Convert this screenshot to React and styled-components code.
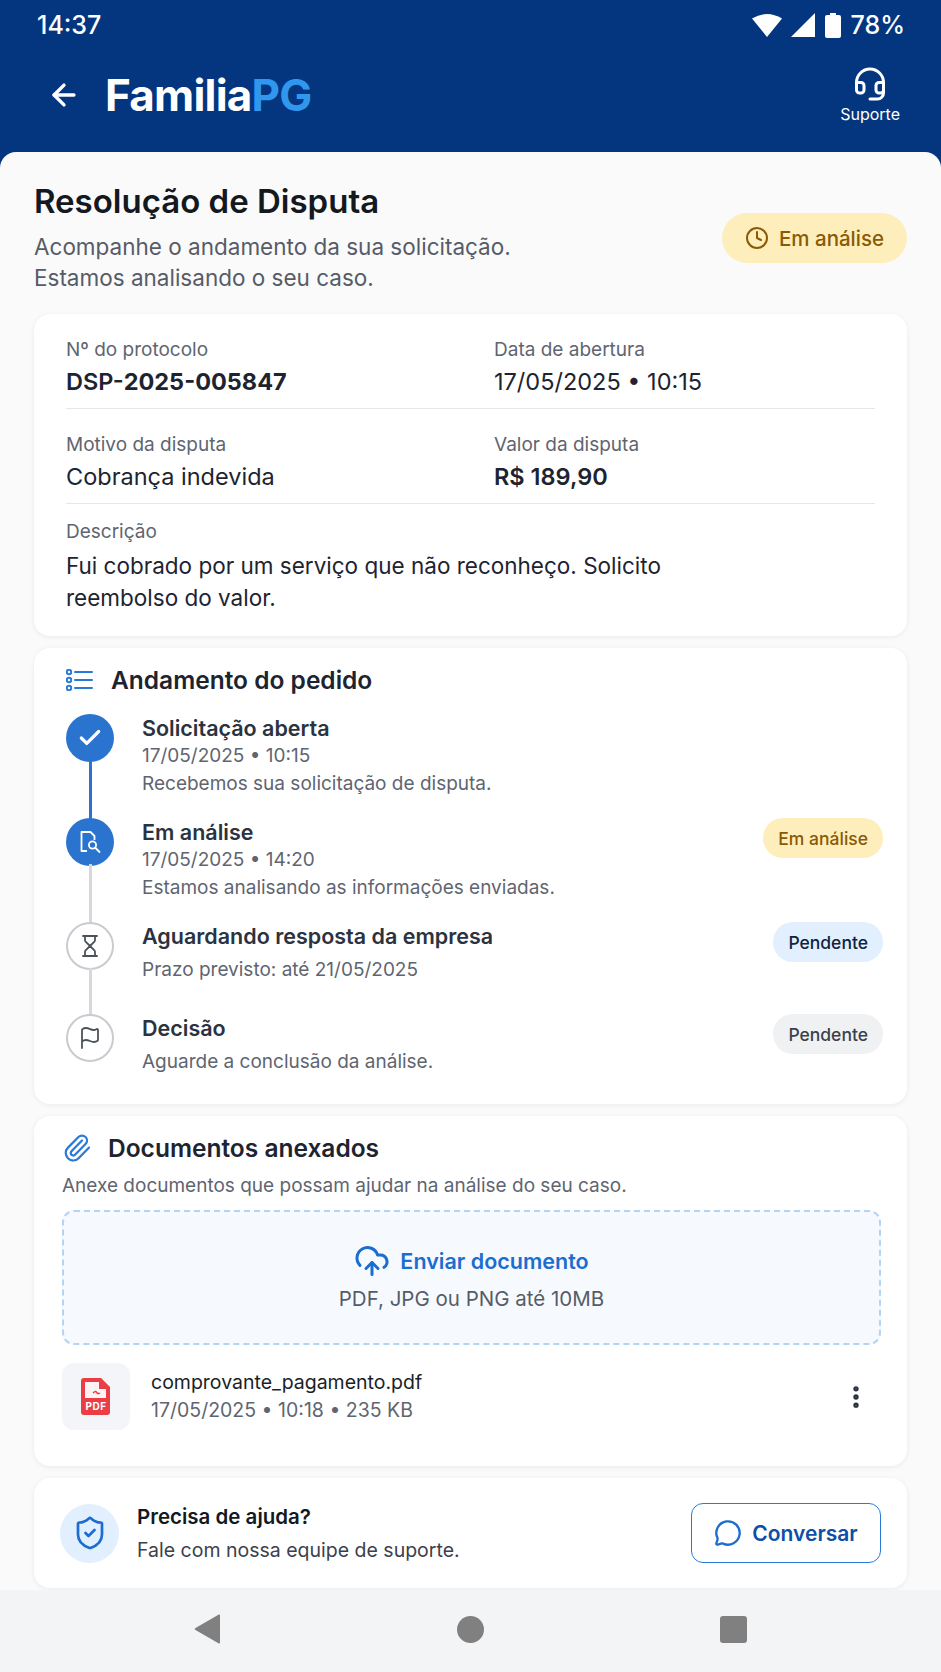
import React from 'react'
import styled, { createGlobalStyle } from 'styled-components'
import { ArrowLeft, Headset, Clock, Check, Hourglass, Flag, Paperclip, CloudUpload, MoreVertical, ShieldCheck, MessageCircle } from 'lucide-react'

const Global = createGlobalStyle`
  html, body { margin: 0; padding: 0; background: #04367f; }
  * { box-sizing: border-box; }
  body { font-family: Inter, "Noto Sans", sans-serif; }
`

const Phone = styled.div`
  width: 941px;
  height: 1672px;
  display: flex;
  flex-direction: column;
  overflow: hidden;
  background: #04367f;
`
const Status = styled.div`
  height: 50px;
  padding: 0 36px 0 37px;
  display: flex;
  align-items: center;
  justify-content: space-between;
  color: #fff;
  font-size: 25px;
  font-weight: 500;
`
const StatusRight = styled.div`
  display: flex;
  align-items: center;
  gap: 9px;
`
const TopBar = styled.div`
  height: 102px;
  padding: 0 41px 12px 47px;
  display: flex;
  align-items: center;
  color: #fff;
`
const Logo = styled.div`
  margin-left: 24px;
  font-size: 44px;
  font-weight: 700;
  letter-spacing: -0.8px;
  flex: 1;
  span { color: #2f97ee; }
`
const Support = styled.div`
  display: flex;
  flex-direction: column;
  align-items: center;
  gap: 2px;
  font-size: 16px;
`
const Sheet = styled.div`
  flex: 1;
  min-height: 0;
  background: #fafafb;
  border-radius: 16px 16px 0 0;
  padding: 0 34px;
  overflow: hidden;
`
const Head = styled.div`
  height: 162px;
  display: flex;
  align-items: flex-start;
  justify-content: space-between;
  padding-top: 29px;
`
const Title = styled.h1`
  margin: 0 0 10px;
  font-size: 33px;
  line-height: 40px;
  font-weight: 600;
  color: #14181f;
`
const Sub = styled.p`
  margin: 0;
  font-size: 22.5px;
  line-height: 31px;
  color: #565c67;
`
const BigBadge = styled.div`
  margin-top: 32px;
  height: 50px;
  width: 185px;
  border-radius: 25px;
  background: #fdeebc;
  color: #8a5a06;
  display: flex;
  align-items: center;
  justify-content: center;
  gap: 10px;
  font-size: 20.5px;
  font-weight: 500;
`
const Card = styled.section`
  background: #fff;
  border-radius: 16px;
  box-shadow: 0 1px 5px rgba(20, 30, 50, 0.07);
  margin-bottom: 12px;
  height: ${p => p.$h}px;
  padding: ${p => p.$pad};
`
const InfoRow = styled.div`
  display: grid;
  grid-template-columns: 428px 1fr;
  height: 95px;
  padding-top: 24px;
  border-bottom: 1px solid #e4e6e9;
`
const Label = styled.div`
  font-size: 19px;
  line-height: 24px;
  color: #5f6570;
`
const Value = styled.div`
  margin-top: 5px;
  font-size: 23.5px;
  line-height: 30px;
  color: #1d2430;
  font-weight: ${p => p.$bold ? 600 : 400};
  b { font-weight: 700; }
`
const Desc = styled.div`
  padding-top: 16px;
`
const DescText = styled.div`
  margin-top: 6px;
  font-size: 22.5px;
  line-height: 32px;
  color: #1d2430;
  width: 640px;
`
const SectionHead = styled.div`
  display: flex;
  align-items: center;
  gap: ${p => p.$gap}px;
  height: 32px;
  font-size: 24.5px;
  font-weight: 600;
  color: #1d2430;
`
const Step = styled.div`
  display: flex;
  height: ${p => p.$h}px;
`
const Rail = styled.div`
  position: relative;
  width: 48px;
  margin-right: 28px;
  flex: none;
  &::after {
    content: '';
    display: ${p => p.$last ? 'none' : 'block'};
    position: absolute;
    left: 22.5px;
    top: 46px;
    bottom: -2px;
    width: 3px;
    background: ${p => p.$active ? '#2a74d0' : '#d6d8dc'};
  }
`
const Dot = styled.div`
  width: 48px;
  height: 48px;
  border-radius: 50%;
  display: flex;
  align-items: center;
  justify-content: center;
  background: ${p => p.$done ? '#2a74d0' : '#fff'};
  border: ${p => p.$done ? 'none' : '2px solid #c9cbd0'};
  color: ${p => p.$done ? '#fff' : '#4c525c'};
`
const StepBody = styled.div`
  flex: 1;
`
const StepTitle = styled.div`
  font-size: 21.5px;
  line-height: 28px;
  font-weight: 600;
  color: #2b3240;
  margin-bottom: ${p => p.$gap || 0}px;
`
const StepText = styled.div`
  font-size: 19px;
  line-height: 27.5px;
  color: #5f6570;
`
const Pill = styled.div`
  flex: none;
  align-self: flex-start;
  margin-top: ${p => p.$top}px;
  height: 40px;
  padding: 0 15px;
  border-radius: 20px;
  display: flex;
  align-items: center;
  font-size: 17.5px;
  font-weight: 500;
  background: ${p => p.$bg};
  color: ${p => p.$fg};
`
const Hint = styled.div`
  margin-top: 9px;
  font-size: 19px;
  line-height: 26px;
  color: #5f6570;
`
const Drop = styled.div`
  margin-top: 11px;
  height: 135px;
  border: 2px dashed #b4d4f6;
  border-radius: 12px;
  background: #f6faff;
  display: flex;
  flex-direction: column;
  align-items: center;
  justify-content: center;
  gap: 6px;
`
const DropTitle = styled.div`
  display: flex;
  align-items: center;
  gap: 10px;
  font-size: 21.5px;
  font-weight: 600;
  color: #1c6dd0;
`
const DropSub = styled.div`
  font-size: 20.5px;
  line-height: 28px;
  color: #565c67;
`
const FileRow = styled.div`
  margin-top: 18px;
  display: flex;
  align-items: center;
`
const FileIcon = styled.div`
  width: 68px;
  height: 67px;
  border-radius: 12px;
  background: #f3f5f8;
  display: flex;
  align-items: center;
  justify-content: center;
  margin-right: 21px;
`
const FileInfo = styled.div`
  flex: 1;
`
const FileName = styled.div`
  font-size: 19.5px;
  line-height: 27px;
  color: #1a1f28;
`
const FileMeta = styled.div`
  font-size: 19.5px;
  line-height: 28px;
  color: #5f6570;
`
const More = styled.div`
  color: #2b3240;
  margin-right: 11px;
  display: flex;
`
const HelpCard = styled(Card)`
  display: flex;
  align-items: center;
  gap: 18px;
  margin-bottom: 0;
`
const HelpIcon = styled.div`
  width: 59px;
  height: 59px;
  border-radius: 50%;
  background: #e2effe;
  color: #1c6dd0;
  display: flex;
  align-items: center;
  justify-content: center;
`
const HelpBody = styled.div`
  flex: 1;
`
const HelpTitle = styled.div`
  font-size: 20.5px;
  line-height: 28px;
  font-weight: 600;
  color: #14181f;
  margin-bottom: 6px;
`
const HelpText = styled.div`
  font-size: 19.5px;
  line-height: 27px;
  color: #3b414c;
`
const ChatButton = styled.div`
  width: 190px;
  height: 60px;
  border: 1.5px solid #2a7ad8;
  border-radius: 12px;
  display: flex;
  align-items: center;
  justify-content: center;
  gap: 10px;
  font-size: 21px;
  font-weight: 600;
  color: #0d4ea6;
`
const Nav = styled.div`
  height: 82px;
  flex: none;
  background: #f3f4f5;
  display: flex;
  justify-content: center;
  gap: 0;
  align-items: center;
  padding-bottom: 4px;
`
const NavSlot = styled.div`
  width: 263px;
  display: flex;
  justify-content: center;
`

const Wifi = () => (
  <svg width="30" height="24" viewBox="0 0 30 24"><path d="M0 5.5Q15 -3.5 30 5.5L15 24Z" fill="#fff" /></svg>
)
const Signal = () => (
  <svg width="24" height="24" viewBox="0 0 24 24"><path d="M24 0V24H0Z" fill="#fff" /></svg>
)
const Battery = () => (
  <svg width="18" height="25" viewBox="0 0 18 25"><path d="M6 0h6v2h3a2 2 0 0 1 2 2v19a2 2 0 0 1-2 2H3a2 2 0 0 1-2-2V4a2 2 0 0 1 2-2h3Z" fill="#fff" /></svg>
)
const ListIcon = () => (
  <svg width="27" height="22" viewBox="0 0 27 22" fill="none" stroke="#2a7ad8" strokeWidth="2">
    <circle cx="3" cy="3" r="2.2" /><circle cx="3" cy="11" r="2.2" /><circle cx="3" cy="19" r="2.2" />
    <path d="M9 3h17M9 11h17M9 19h17" strokeLinecap="round" />
  </svg>
)
const DocSearch = () => (
  <svg width="24" height="24" viewBox="0 0 24 24" fill="none" stroke="#fff" strokeWidth="1.8">
    <path d="M9 21H3.5V2h9l4 4v4" strokeLinejoin="round" />
    <circle cx="14.5" cy="15" r="3.6" />
    <path d="M17.5 18l4 4" strokeLinecap="round" />
  </svg>
)
const PdfIcon = () => (
  <svg width="30" height="37" viewBox="0 0 30 37">
    <path d="M3 0h17l9 9v25a3 3 0 0 1-3 3H3a3 3 0 0 1-3-3V3a3 3 0 0 1 3-3Z" fill="#ea3d45" />
    <path d="M4 4h14v7h7v9H4Z" fill="#fdf3f3" />
    <path d="M12 15q3-3 4 0q2 1 3 0" stroke="#ea3d45" strokeWidth="1.4" fill="none" />
    <text x="15" y="32" textAnchor="middle" fontSize="10" fontWeight="700" fill="#fff" fontFamily="Inter" letterSpacing="0.5">PDF</text>
  </svg>
)

const steps = [
  { h: 104, done: true, active: true, icon: <Check size={26} strokeWidth={3} />, title: 'Solicitação aberta', lines: ['17/05/2025 • 10:15', 'Recebemos sua solicitação de disputa.'] },
  { h: 104, done: true, icon: <DocSearch />, title: 'Em análise', lines: ['17/05/2025 • 14:20', 'Estamos analisando as informações enviadas.'], pill: { label: 'Em análise', bg: '#fdeebc', fg: '#8a5a06', top: 0 } },
  { h: 92, icon: <Hourglass size={24} strokeWidth={1.8} />, title: 'Aguardando resposta da empresa', gap: 6, lines: ['Prazo previsto: até 21/05/2025'], pill: { label: 'Pendente', bg: '#e2effe', fg: '#10233f', top: 0 } },
  { h: 80, last: true, icon: <Flag size={24} strokeWidth={1.8} />, title: 'Decisão', gap: 6, lines: ['Aguarde a conclusão da análise.'], pill: { label: 'Pendente', bg: '#f0f1f3', fg: '#3b414c', top: 0 } },
]

export default function App() {
  return (
    <Phone>
      <Global />
      <Status>
        <span>14:37</span>
        <StatusRight><Wifi /><Signal /><Battery /><span>78%</span></StatusRight>
      </Status>
      <TopBar>
        <ArrowLeft size={34} strokeWidth={2.4} />
        <Logo>Familia<span>PG</span></Logo>
        <Support><Headset size={36} strokeWidth={2} />Suporte</Support>
      </TopBar>
      <Sheet>
        <Head>
          <div>
            <Title>Resolução de Disputa</Title>
            <Sub>Acompanhe o andamento da sua solicitação.<br />Estamos analisando o seu caso.</Sub>
          </div>
          <BigBadge><Clock size={24} strokeWidth={2} />Em análise</BigBadge>
        </Head>
        <Card $h={322} $pad="0 32px">
          <InfoRow>
            <div><Label>Nº do protocolo</Label><Value $bold>DSP-<b>2025-005847</b></Value></div>
            <div><Label>Data de abertura</Label><Value>17/05/2025 • 10:15</Value></div>
          </InfoRow>
          <InfoRow>
            <div><Label>Motivo da disputa</Label><Value>Cobrança indevida</Value></div>
            <div><Label>Valor da disputa</Label><Value $bold>R$ 189,90</Value></div>
          </InfoRow>
          <Desc>
            <Label>Descrição</Label>
            <DescText>Fui cobrado por um serviço que não reconheço. Solicito reembolso do valor.</DescText>
          </Desc>
        </Card>
        <Card $h={456} $pad="16px 24px 0 32px">
          <SectionHead $gap={18}><ListIcon />Andamento do pedido</SectionHead>
          <div style={{ height: 18 }} />
          {steps.map(s => (
            <Step key={s.title} $h={s.h}>
              <Rail $active={s.active} $last={s.last}>
                <Dot $done={s.done}>{s.icon}</Dot>
              </Rail>
              <StepBody>
                <StepTitle $gap={s.gap}>{s.title}</StepTitle>
                {s.lines.map(l => <StepText key={l}>{l}</StepText>)}
              </StepBody>
              {s.pill && <Pill $bg={s.pill.bg} $fg={s.pill.fg} $top={s.pill.top}>{s.pill.label}</Pill>}
            </Step>
          ))}
        </Card>
        <Card $h={350} $pad="16px 26px 0 28px">
          <SectionHead $gap={16}><Paperclip size={30} color="#2a7ad8" strokeWidth={1.8} />Documentos anexados</SectionHead>
          <Hint>Anexe documentos que possam ajudar na análise do seu caso.</Hint>
          <Drop>
            <DropTitle><CloudUpload size={36} strokeWidth={2} />Enviar documento</DropTitle>
            <DropSub>PDF, JPG ou PNG até 10MB</DropSub>
          </Drop>
          <FileRow>
            <FileIcon><PdfIcon /></FileIcon>
            <FileInfo>
              <FileName>comprovante_pagamento.pdf</FileName>
              <FileMeta>17/05/2025 • 10:18 • 235 KB</FileMeta>
            </FileInfo>
            <More><MoreVertical size={28} strokeWidth={2.6} /></More>
          </FileRow>
        </Card>
        <HelpCard $h={110} $pad="0 26px">
          <HelpIcon><ShieldCheck size={36} strokeWidth={1.8} /></HelpIcon>
          <HelpBody>
            <HelpTitle>Precisa de ajuda?</HelpTitle>
            <HelpText>Fale com nossa equipe de suporte.</HelpText>
          </HelpBody>
          <ChatButton><MessageCircle size={28} color="#1c6dd0" strokeWidth={2} />Conversar</ChatButton>
        </HelpCard>
      </Sheet>
      <Nav>
        <NavSlot><svg width="28" height="30" viewBox="0 0 28 30"><path d="M26 1.5V28.5a1 1 0 0 1-1.6.8L1.5 16a1.2 1.2 0 0 1 0-2L24.4.7a1 1 0 0 1 1.6.8Z" fill="#808080" /></svg></NavSlot>
        <NavSlot><svg width="27" height="27" viewBox="0 0 27 27"><circle cx="13.5" cy="13.5" r="13.5" fill="#808080" /></svg></NavSlot>
        <NavSlot><svg width="27" height="27" viewBox="0 0 27 27"><rect width="27" height="27" rx="3" fill="#808080" /></svg></NavSlot>
      </Nav>
    </Phone>
  )
}
